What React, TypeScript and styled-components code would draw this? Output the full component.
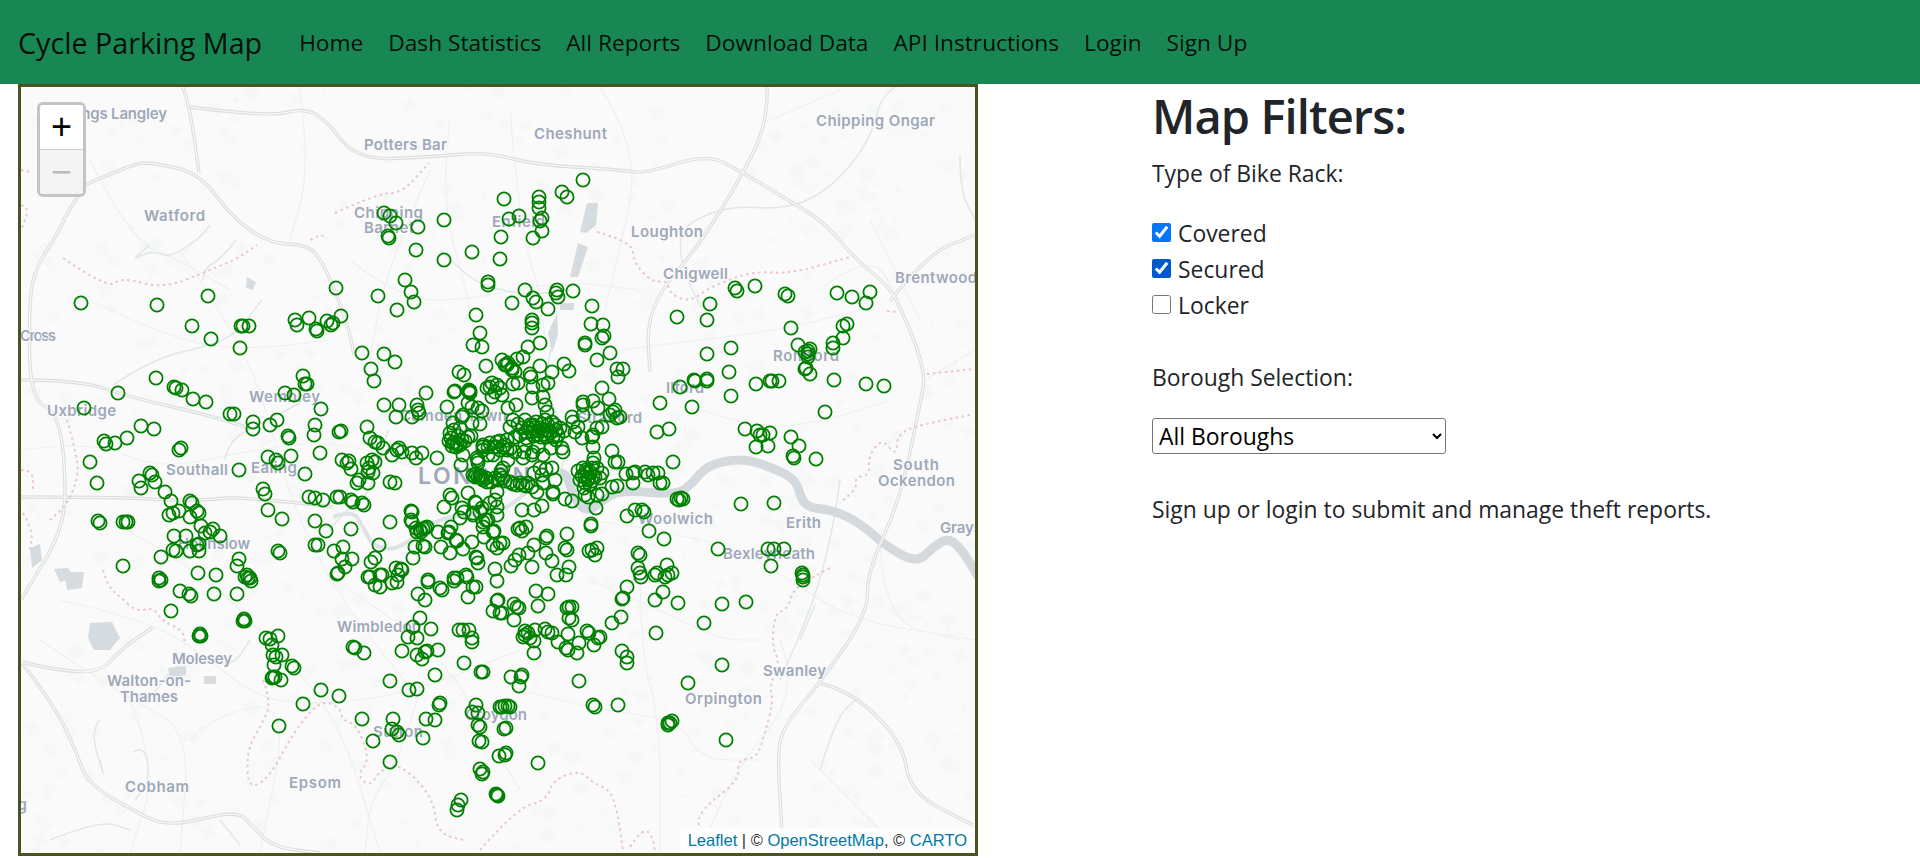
import React from "react";
import styled, { createGlobalStyle } from "styled-components";

const GlobalStyle = createGlobalStyle`
  html, body {
    margin: 0;
    background: #fff;
    overflow: hidden;
  }
  body {
    font-family: "Open Sans", "Noto Sans", sans-serif;
    color: #212529;
  }
`;

const Navbar = styled.nav`
  display: flex;
  align-items: center;
  height: 84px;
  padding-left: 18px;
  background-color: #198754;
  color: rgba(0, 0, 0, 0.9);
`;

const Brand = styled.a`
  font-size: 28.7px;
  margin-right: 37px;
`;

const NavList = styled.ul`
  display: flex;
  gap: 25px;
  list-style: none;
  margin: 0;
  padding: 0;
  font-size: 22.7px;
`;

const Content = styled.main`
  display: flex;
  align-items: flex-start;
  padding-left: 18px;
`;

const MapFrame = styled.div`
  position: relative;
  flex: none;
  width: 954px;
  height: 766px;
  border: 3px solid #4b5320;
  background: #fafafa;
  overflow: hidden;
  svg {
    display: block;
  }
`;

const ZoomControl = styled.div`
  position: absolute;
  top: 15px;
  left: 16px;
  width: 43px;
  border: 3px solid #c4c4c4;
  border-radius: 6px;
  overflow: hidden;
`;

const ZoomButton = styled.div<{ $disabled?: boolean }>`
  display: flex;
  align-items: center;
  justify-content: center;
  height: 44px;
  font-family: "Liberation Sans", sans-serif;
  font-size: 36px;
  line-height: 1;
  color: ${(p) => (p.$disabled ? "#bbb" : "#000")};
  background: ${(p) => (p.$disabled ? "#f4f4f4" : "#fff")};
  & + & {
    border-top: 1px solid #ccc;
  }
`;

const Attribution = styled.div`
  position: absolute;
  right: 0;
  bottom: 0;
  padding: 0 8px;
  height: 25px;
  line-height: 25px;
  font-family: "Liberation Sans", sans-serif;
  font-size: 16.5px;
  color: #333;
  background: rgba(255, 255, 255, 0.8);
  a {
    color: #0078a8;
  }
`;

const Filters = styled.section`
  margin-left: 174px;
  font-size: 22.9px;
`;

const Heading = styled.h1`
  margin: 0;
  height: 64px;
  line-height: 64px;
  font-size: 47px;
  font-weight: 600;
  letter-spacing: -0.9px;
`;

const Line = styled.div<{ $top: number }>`
  margin-top: ${(p) => p.$top}px;
  height: 36px;
  line-height: 36px;
  white-space: nowrap;
`;

const CheckGroup = styled.div`
  margin-top: 23px;
`;

const CheckRow = styled.label`
  display: flex;
  align-items: center;
  gap: 7px;
  height: 36px;
`;

const Check = styled.input<{ $accent?: string }>`
  width: 19px;
  height: 19px;
  margin: 0 0 2px;
  accent-color: ${(p) => p.$accent || "#0075ff"};
`;

const BoroughSelect = styled.select`
  display: block;
  margin-top: 22px;
  width: 294px;
  height: 36px;
  padding: 0 2px;
  font-family: inherit;
  font-size: 22.9px;
  color: #000;
  background: #fff;
  border: 1px solid #767676;
  border-radius: 3px;
`;

const parsePoints = (s: string) =>
  s
    .trim()
    .split(/\s+/)
    .map((p) => p.split(",").map(Number));

// polyline "M x,y L x,y ..." into a soft curve through the midpoints
const smooth = (d: string) => {
  const pts = parsePoints(d.replace(/[MLZ]/g, " "));
  let out = `M${pts[0][0]},${pts[0][1]}`;
  for (let i = 1; i < pts.length - 1; i++) {
    const mx = (pts[i][0] + pts[i + 1][0]) / 2;
    const my = (pts[i][1] + pts[i + 1][1]) / 2;
    out += `Q${pts[i][0]},${pts[i][1]} ${mx},${my}`;
  }
  const last = pts[pts.length - 1];
  return `${out}L${last[0]},${last[1]}`;
};

// marker positions read off the map, in page pixels
const RAW_MARKERS = `
583,180 562,192 567,197 504,199 539,197 539,202 539,208 519,216 509,219 542,218 540,221 542,231 533,238 501,237
444,220 418,227 384,213 390,216 396,223 388,236 389,238 416,250 444,260 472,252 500,259 488,282 488,285 525,290
556,293 557,290 558,297 573,291 533,298 536,302 336,288 405,280 411,292 414,302 378,296 397,310 512,303 548,309
592,306 677,317 476,315 532,320 532,323 532,328 480,333 473,345 482,347 528,347 540,343 591,324 603,325 604,336
602,338 585,343 585,345 610,353 597,360 502,360 505,365 508,363 512,370 517,359 523,357 486,366 540,366 564,364
569,371 552,372 530,374 531,377 459,372 464,375 617,369 623,369 618,377 694,380
81,303 157,305 208,296 192,326 241,326 243,326 249,326 211,339 240,348 295,320 297,325 309,318 327,321 341,316
333,323 331,325 316,329 317,331 362,353 384,354 395,362 371,369 374,381 303,376 156,378
118,393 84,408 174,387 176,388 182,390 193,399 206,402 230,414 234,414 305,384 307,384 285,393 294,395 321,409
253,422 253,429 270,425 277,420 288,436 289,438 315,425 314,435 339,432 341,431 367,427 384,405 399,405 417,405
419,413 396,417 412,417 426,393 447,407 455,391 470,391 470,393 468,403
141,426 154,429 127,438 104,441 106,444 115,443 179,450 181,448 90,462 97,483 139,481 141,488 150,473 152,475
155,482 165,492 171,501 190,501 192,503 197,511 199,513 169,515 173,513 179,511 190,517 98,521 100,523 123,522
126,522 128,522 201,526 205,533 213,529 210,532 220,536 174,536 186,536 197,545 199,544 173,550 176,551 190,551
199,551 161,557 239,559 237,566 123,566 198,573 216,575 159,578 161,580 247,575 245,577 250,578
239,470 268,457 276,460 278,463 291,456 305,474 320,453 342,460 349,461 347,463 351,469 357,483 359,480 368,483
373,473 369,468 367,463 372,460 375,462 368,472 370,438 375,442 378,443 383,448 392,455 397,450 399,448 402,452
412,453 416,458 422,453 437,458 390,482 395,483 461,465 463,455 478,463
263,489 265,494 309,497 315,498 323,500 337,497 340,497 351,500 353,502 362,503 364,505
268,510 282,519 315,521 326,531 351,529 390,522 315,545 318,545 278,551 280,553 334,551 343,547 342,559 352,559
345,567 338,573 379,545 375,558 371,562 396,568 401,569 370,577 380,575 398,575
411,511 411,520 416,528 421,532 423,529 427,527 415,547 425,547 413,558 438,532 449,532 451,527 441,547 450,553
456,540 463,549 472,542 484,537 483,527 493,532 493,545 477,558 478,563 428,582 457,578 466,575
444,507 450,495 452,498 468,493 475,502 462,508 464,512 473,513 482,508 486,520 490,503 497,507
450,433 453,443 455,442 457,444 462,440 468,437 453,423 463,415 472,407 478,408 472,423 480,424 490,387 497,385
492,397 487,388 451,438 458,436 454,430 460,428 449,441 452,446 456,447 460,445 465,441 471,436
480,477 482,478 487,482 475,477 497,492 483,447 497,447 488,455
503,360 507,365 512,368 515,372 492,383 497,385 500,388 488,388 495,392 502,395 518,383 513,384 533,387 543,385
548,383 532,398 543,397 545,405 547,412 516,405 508,408 469,390 469,392 454,392 417,405 413,417 418,410 477,408
482,411 462,417 513,420 525,420 510,427 520,435 528,428 535,428 540,428 545,420 543,430 548,425 555,425 558,435
553,437 547,437 537,435 532,432 525,445 515,437 507,440 483,445 490,443 497,442 503,447 507,450 500,450 483,450
493,455 523,458 533,452 532,455 543,455 562,448 563,452 463,455 460,465 478,460 477,458 508,460
530,425 536,422 542,424 548,430 552,422 526,432 533,425 538,431 544,434 550,433 556,430 560,428 564,431 534,436
541,437 522,428 518,424 526,438 505,445 510,449 494,447 488,447 500,441 515,452 524,452 538,447 551,448 556,440
572,417 573,422 578,427 575,432 582,438 593,435 597,428 602,427 592,437 593,447 594,458 593,463 583,402 583,405
593,401 598,408 583,415 609,399 602,388 610,415 613,412 617,418 615,410 620,417 657,432 669,429 612,451 618,462
615,462 673,462 626,474 633,473 645,472 635,472 648,475 653,473 658,473 660,483 663,483 633,483
578,471 583,468 592,468 597,468 602,473 580,480 585,483 588,480 590,485 585,477 587,472 595,477 585,495 588,497
597,495 602,494 612,487 617,486 596,508 591,524 591,526 565,499 572,501 542,506 534,510 522,510
590,472 593,476 586,470 582,476 589,478 584,488 592,481 600,478
546,469 540,468 552,468 534,473 542,475 555,480 543,483 532,487 537,492 553,492 553,494
473,475 478,477 483,480 488,482 495,478 500,475 503,478 510,482 517,485 523,485 528,483 497,492 503,468
476,474 481,476 486,478 491,482 498,480 505,481 513,484 520,483 526,486 501,471
468,493 462,508 476,503 490,503 495,500 473,515 480,512 497,515 488,520 483,522 460,518 451,527 494,531 448,533
438,533 423,528 420,530 425,528 417,532 412,512 412,522 457,541 472,542 485,537 503,543 500,543 497,548 522,531
518,529 526,527 520,528 534,545 547,536 546,538 567,534 546,553 565,548 567,550 552,561 569,567 528,553 519,555
515,560 532,567 511,566 495,569 476,557 478,563 463,549 441,546 449,553 415,548 412,558 423,546 402,570 428,580
454,578 467,575 557,575 566,575 589,551 592,550 597,548 595,555 627,516 635,510 642,510 644,512 649,531 664,539
638,553 640,555 638,568 640,573 657,573 655,575 667,565 672,573 718,549 768,549 774,549 784,549 771,566 741,504
774,503 677,499 679,500 681,498 683,499 793,456 794,458 791,437 660,403 692,407 825,412 745,429 757,431 763,435
770,433 760,435 799,446 756,447 768,446 816,459 802,573 803,575 803,580 803,577 650,531 641,577 667,566 671,573
665,577 627,587 622,599 663,592 655,600 678,603 722,604 746,602 704,623 621,617 612,623 656,633 622,651 627,657
627,663 600,637
735,288 737,291 755,286 785,294 788,296 837,293 852,297 870,292 866,303 710,304 707,320 791,328 843,326 847,324
843,338 833,343 833,348 798,345 810,349 808,351 805,352 808,354 808,357 805,369 806,368 810,374 834,380 866,384
884,386 731,348 707,354 729,372 707,379 695,381 680,387 756,384 770,381 772,381 779,381 731,396 707,381
159,581 180,591 189,594 191,596 198,574 216,576 214,594 237,594 171,611 245,577 248,578 251,581
200,634 201,636 199,636 244,619 245,621 243,621
266,638 278,636 270,639 272,645 273,655 276,657 282,655 274,665 292,666 294,668 272,678 275,677 273,677 281,680
321,690 339,696 303,704 279,726 353,647 355,648 364,653 362,719 373,741 390,681 409,690 417,689 402,651 408,637
413,627 420,618 417,638 431,629 417,655 422,659 425,652 427,651 438,650 464,663 435,675 481,672 440,703 439,705
426,719 435,720 393,719 392,729 397,732 399,735 423,738 390,762 459,630 463,630 469,630 472,638 472,642 476,705
472,712 478,713 478,725 480,727 479,741 480,769 483,772 482,774 496,794 498,796 461,800 458,805 457,810 499,756
500,707 337,574 368,577 375,585 380,587 382,575 392,583 397,582 398,574 427,582 454,581 467,577 440,588 442,590
418,594 425,600 468,597 473,587 476,587 497,581 497,601 493,611 500,613
536,591 548,594 514,604 519,608 517,607 538,606 502,613 514,620 569,607 572,607 567,608 569,618 572,620 557,576
566,575 498,600 664,577 668,575 623,598 663,593 656,600 722,665 688,683 579,681 593,705 595,707 618,705 668,723
670,723 672,721 668,725 726,740 538,763 497,795 506,753 505,755 511,677 522,675 521,677 519,686 483,672 502,707
505,706 508,706 510,707 506,728 504,729 482,742 525,635 523,637 528,633 535,630 545,629 548,632 552,633 534,641
534,653 558,642 568,634 566,648 568,650 577,653 579,643 587,631 589,633 598,638 594,645 527,633 530,638 525,631
`;

const MARKERS = parsePoints(RAW_MARKERS).filter(
  ([x, y], i, all) =>
    !all.slice(0, i).some(([a, b]) => Math.abs(a - x) + Math.abs(b - y) < 1.5)
);

const MOTORWAYS = [
  "M85,185 L134,163 L154,163 L199,173 L232,217 L268,243 L308,245 L321,260 L335,290 L350,333 L354,355",
  "M183,87 L190,107 L199,173",
  "M190,107 L268,117 L304,108 L326,120 L357,160 L429,157 L487,152 L536,165 L625,170 L643,174 L707,154 L740,171 L783,197 L823,221 L857,261 L890,287 L903,314 L917,347 L925,377 L921,400 L900,500 L867,573 L868,613 L820,683 L780,730 L778,770 L782,827 L782,853",
  "M820,683 L853,692 L903,743 L910,793 L973,825",
  "M767,87 L768,121 L743,174 L700,244 L660,291 L647,327 L650,372",
  "M890,301 L927,254 L975,235",
  "M22,662 L53,670 L100,673 L120,650 L153,627",
  "M22,663 L53,703 L77,753 L87,783 L137,813 L170,827 L237,810 L253,827 L273,847 L320,853",
  "M85,185 L67,213 L58,233 L36,267 L29,300 L30,400 L60,413 L67,500 L57,540 L33,580 L21,600",
  "M21,497 L113,497 L167,500 L207,500 L233,497 L300,503 L333,507",
  "M21,380 L80,380 L133,398 L200,413 L250,428",
].map(smooth);

const BOUNDARIES = [
  "M63,258 L108,289 L122,277 L163,289 L210,270 L237,259 L257,245",
  "M310,240 L320,234 L327,238",
  "M335,213 L379,193 L402,193 L429,163",
  "M597,232 L633,242 L633,262 L653,283 L667,280 L670,294 L690,302 L710,287 L753,271 L790,274 L850,257",
  "M887,311 L898,312",
  "M927,374 L973,369",
  "M970,415 L933,422 L897,432 L897,457 L882,438 L868,457 L870,475 L855,477 L857,488 L840,503",
  "M830,568 L813,577 L793,590 L787,610 L775,613 L772,647 L780,663 L770,683 L773,703 L765,733 L757,758 L737,760 L740,780 L700,810 L698,830",
  "M480,850 L517,808 L547,800 L553,780 L580,770 L593,783 L610,790 L617,810 L623,850",
  "M630,847 L643,827 L653,837 L655,853",
  "M103,570 L107,585 L120,597 L137,612 L153,607 L163,622 L183,630 L185,645",
  "M263,680 L272,703 L260,727 L247,750 L248,790 L270,777 L293,733 L320,700 L340,707 L342,720 L357,725 L370,760 L357,775 L370,787 L380,770 L400,763 L433,797 L437,833 L463,840",
  "M67,420 L72,437 L80,473 L67,505 L50,520",
  "M21,470 L33,470 L33,490",
  "M23,513 L33,530 L30,550",
  "M21,170 L30,172",
  "M21,205 L30,207 L21,230",
].map(smooth);

const THAMES_EAST = smooth(
  "M560,473 L567,473 L573,497 L587,513 L607,497 L623,490 L677,495 L693,483 L707,465 L743,458 L773,468 L797,480 L803,507 L833,510 L860,523 L887,547 L917,563 L933,547 L950,537 L967,557 L978,577"
);
const THAMES_WEST = smooth(
  "M333,517 L353,510 L363,527 L373,547 L400,550 L433,520 L470,514 L500,513 L530,490 L548,474 L560,473"
);

const RIVERS = [
  "M150,245 L128,262 L152,250 L170,258 L200,238 L210,225",
  "M236,240 L222,258 L205,268 L203,280",
  "M113,385 L150,360 L210,345 L235,335 L262,300",
  "M225,460 L228,440 L268,420 L300,403",
  "M330,530 L345,510 L370,495 L388,430",
  "M440,250 L470,280 L500,290 L530,295 L570,290",
  "M555,335 L540,380 L570,440 L560,473",
  "M700,305 L665,240 L720,205 L790,210 L835,185 L870,140 L880,100 L895,87",
  "M960,155 L960,190 L975,220",
  "M840,480 L835,520 L815,600 L780,680",
  "M620,620 L635,575",
  "M800,640 L815,605",
  "M820,770 L835,720 L855,700",
  "M150,700 L180,650 L230,670 L250,640",
  "M100,720 L90,730 L105,780 L100,760",
  "M133,752 L145,745 L150,780 L135,800",
  "M50,840 L100,820 L130,830",
  "M220,820 L240,845",
].map(smooth);

const MINOR_ROADS = [
  "M21,450 L90,440 L160,470 L250,450 L340,440 L420,470",
  "M180,250 L240,340 L270,420 L290,500 L340,600 L420,700",
  "M90,300 L170,340 L250,350 L330,340",
  "M110,520 L200,570 L270,640 L340,720 L380,853",
  "M60,600 L150,620 L210,660 L260,700 L330,705 L420,690 L520,650",
  "M190,740 L215,715 L290,700 L260,853",
  "M350,590 L440,650 L490,740 L520,790",
  "M420,690 L400,760 L370,800 L365,853",
  "M450,120 L440,200 L470,300 L480,380",
  "M510,110 L520,230 L540,290 L545,340",
  "M350,260 L400,300 L470,300 L560,280 L640,290",
  "M600,87 L640,150 L620,250 L600,330",
  "M620,350 L700,340 L780,330 L860,310",
  "M700,410 L760,430 L830,420 L890,400",
  "M590,520 L660,530 L740,550 L790,580 L850,620 L975,640",
  "M590,580 L660,610 L720,640 L760,640",
  "M520,690 L600,710 L680,720 L700,760 L760,760",
  "M780,640 L800,690 L735,770 L700,853",
  "M640,560 L640,650 L660,720 L660,853",
  "M880,530 L880,620 L960,640",
  "M810,760 L880,830",
  "M770,120 L840,90",
  "M870,220 L920,320",
  "M925,380 L975,350",
  "M820,290 L870,250 L900,301",
  "M40,640 L130,700 L190,730 L180,853",
  "M120,680 L160,760 L130,853",
  "M300,87 L310,170 L290,240",
  "M430,170 L400,240 L380,300 L370,360",
  "M90,160 L130,240 L180,260 L230,290",
].map(smooth);

const RESERVOIRS = [
  "M587,203 L598,203 L596,225 L586,233 L580,232 Z",
  "M578,243 L588,247 L578,277 L570,277 Z",
  "M560,303 L574,303 L574,310 L560,310 Z",
  "M557,313 L548,333 L552,353 L558,335 Z",
  "M90,623 L112,622 L120,638 L110,650 L94,650 L88,638 Z",
  "M64,572 L84,572 L82,588 L67,590 Z",
  "M30,548 L40,544 L42,560 L32,568 Z",
  "M54,569 L68,568 L74,578 L60,582 Z",
  "M168,668 L186,666 L186,675 L170,678 Z",
  "M204,676 L216,676 L216,684 L204,684 Z",
  "M247,277 L256,282 L253,290 L246,288 Z",
];

// faint built-up blocks, placed with a small seeded generator
const rand = (() => {
  let seed = 7;
  return () => {
    seed = (seed * 16807) % 2147483647;
    return seed / 2147483647;
  };
})();
const BLOCKS = Array.from({ length: 640 }, () => {
  const x = 21 + rand() * 954;
  const y = 87 + rand() * 766;
  const s = 4 + rand() * 9;
  return `M${x},${y}l${s},${-s * 0.5}l${s * 0.6},${s * 0.8}l${-s * 0.9},${s * 0.6}z`;
}).join("");

type Label = { text: string; x: number; y: number; w: number; size?: number };

const LABELS: Label[] = [
  { text: "Kings Langley", x: 67, y: 113, w: 100 },
  { text: "Potters Bar", x: 364, y: 144, w: 83 },
  { text: "Cheshunt", x: 534, y: 133, w: 73 },
  { text: "Chipping Ongar", x: 816, y: 120, w: 119 },
  { text: "Watford", x: 144, y: 215, w: 61 },
  { text: "Chipping", x: 354, y: 212, w: 69 },
  { text: "Barnet", x: 364, y: 227, w: 50 },
  { text: "Enfield", x: 492, y: 221, w: 53 },
  { text: "Loughton", x: 631, y: 231, w: 72 },
  { text: "Chigwell", x: 663, y: 273, w: 65 },
  { text: "Brentwood", x: 895, y: 277, w: 82 },
  { text: "Cross", x: 20, y: 335, w: 36 },
  { text: "Romford", x: 773, y: 355, w: 66 },
  { text: "Ilford", x: 666, y: 387, w: 38 },
  { text: "Wembley", x: 249, y: 396, w: 71 },
  { text: "Uxbridge", x: 47, y: 410, w: 69 },
  { text: "Camden Town", x: 400, y: 415, w: 107 },
  { text: "Stratford", x: 577, y: 417, w: 65 },
  { text: "South", x: 893, y: 464, w: 46 },
  { text: "Ockendon", x: 878, y: 480, w: 77 },
  { text: "Southall", x: 166, y: 469, w: 62 },
  { text: "Ealing", x: 251, y: 467, w: 46 },
  { text: "LONDON", x: 418, y: 476, w: 112, size: 23 },
  { text: "Woolwich", x: 638, y: 518, w: 75 },
  { text: "Erith", x: 786, y: 522, w: 35 },
  { text: "Grays", x: 940, y: 527, w: 42 },
  { text: "Hounslow", x: 178, y: 543, w: 72 },
  { text: "Bexleyheath", x: 723, y: 553, w: 92 },
  { text: "Wimbledon", x: 337, y: 626, w: 84 },
  { text: "Molesey", x: 172, y: 658, w: 60 },
  { text: "Swanley", x: 763, y: 670, w: 63 },
  { text: "Walton-on-", x: 107, y: 680, w: 84 },
  { text: "Thames", x: 120, y: 696, w: 58 },
  { text: "Orpington", x: 685, y: 698, w: 77 },
  { text: "Croydon", x: 465, y: 714, w: 62 },
  { text: "Sutton", x: 373, y: 731, w: 50 },
  { text: "Epsom", x: 289, y: 782, w: 52 },
  { text: "Cobham", x: 125, y: 786, w: 64 },
  { text: "Woking", x: -23, y: 804, w: 50 },
];

function LondonMap() {
  return (
    <svg width="954" height="766" viewBox="21 87 954 766">
      <path d={BLOCKS} fill="#f6f7f7" />
      <g fill="none" stroke="#eef0f0" strokeWidth="1.2">
        {MINOR_ROADS.map((d) => (
          <path key={d} d={d} />
        ))}
      </g>
      <g fill="none" stroke="#e0e6ea" strokeWidth="1.5">
        {RIVERS.map((d) => (
          <path key={d} d={d} />
        ))}
      </g>
      <g fill="#d6dbdf">
        {RESERVOIRS.map((d) => (
          <path key={d} d={d} />
        ))}
      </g>
      <g fill="none" strokeLinejoin="round">
        <path d={THAMES_WEST} stroke="#dfe3e6" strokeWidth="4" />
        <path d={THAMES_EAST} stroke="#d3d9dd" strokeWidth="9" />
      </g>
      <g fill="none" strokeLinejoin="round">
        {MOTORWAYS.map((d) => (
          <path key={d} d={d} stroke="#dcdede" strokeWidth="3.4" />
        ))}
        {MOTORWAYS.map((d) => (
          <path key={`${d}-in`} d={d} stroke="#fafafa" strokeWidth="1.2" />
        ))}
      </g>
      <g fill="none" stroke="#e8c6cb" strokeWidth="2" strokeDasharray="2.5 3.5">
        {BOUNDARIES.map((d) => (
          <path key={d} d={d} />
        ))}
      </g>
      <g
        fontFamily="Inter, sans-serif"
        fontWeight="600"
        fill="#9ea8b9"
        stroke="#fafafa"
        strokeWidth="2"
        paintOrder="stroke"
      >
        {LABELS.map((l) => (
          <text
            key={l.text}
            x={l.x}
            y={l.y + (l.size ? 8 : 5.5)}
            fontSize={l.size || 15}
            textLength={l.w}
          >
            {l.text}
          </text>
        ))}
      </g>
      <g fill="none" stroke="#008000" strokeWidth="1.8">
        {MARKERS.map(([x, y], i) => (
          <circle key={i} cx={x} cy={y} r="6.6" />
        ))}
      </g>
    </svg>
  );
}

export default function App() {
  return (
    <>
      <GlobalStyle />
      <Navbar>
        <Brand>Cycle Parking Map</Brand>
        <NavList>
          <li>Home</li>
          <li>Dash Statistics</li>
          <li>All Reports</li>
          <li>Download Data</li>
          <li>API Instructions</li>
          <li>Login</li>
          <li>Sign Up</li>
        </NavList>
      </Navbar>
      <Content>
        <MapFrame>
          <LondonMap />
          <ZoomControl>
            <ZoomButton>+</ZoomButton>
            <ZoomButton $disabled>−</ZoomButton>
          </ZoomControl>
          <Attribution>
            <a>Leaflet</a> | © <a>OpenStreetMap</a>, © <a>CARTO</a>
          </Attribution>
        </MapFrame>
        <Filters>
          <Heading>Map Filters:</Heading>
          <Line $top={8}>Type of Bike Rack:</Line>
          <CheckGroup>
            <CheckRow>
              <Check type="checkbox" defaultChecked />
              Covered
            </CheckRow>
            <CheckRow>
              <Check type="checkbox" defaultChecked $accent="#0058cf" />
              Secured
            </CheckRow>
            <CheckRow>
              <Check type="checkbox" />
              Locker
            </CheckRow>
          </CheckGroup>
          <Line $top={37}>Borough Selection:</Line>
          <BoroughSelect defaultValue="all">
            <option value="all">All Boroughs</option>
          </BoroughSelect>
          <Line $top={38}>Sign up or login to submit and manage theft reports.</Line>
        </Filters>
      </Content>
    </>
  );
}
